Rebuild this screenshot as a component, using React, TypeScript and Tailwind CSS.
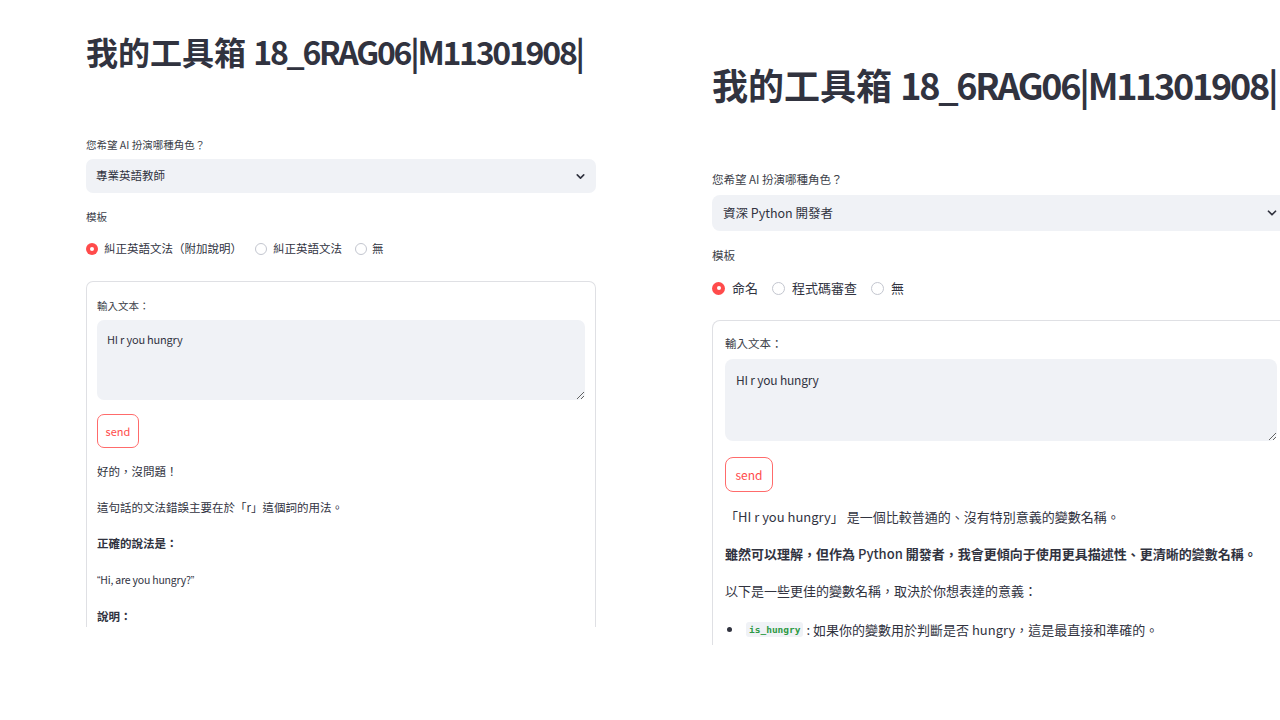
import { ChevronDown } from "lucide-react";

const font = "font-['Noto_Sans_CJK_TC','Noto_Sans_CJK_SC',sans-serif]";

function Radio({ checked, size }: { checked?: boolean; size: string }) {
  if (checked) {
    return (
      <span className={`${size} shrink-0 rounded-full bg-[#ff4b4b] flex items-center justify-center`}>
        <span className="w-[4px] h-[4px] rounded-full bg-white" />
      </span>
    );
  }
  return <span className={`${size} block shrink-0 rounded-full border border-[#c3c6cf] bg-white`} />;
}

function LeftShot() {
  return (
    <div className={`ml-[86px] w-[510px] shrink-0 h-[627px] overflow-hidden flex flex-col text-[#31333f] ${font}`}>
      <h1 className="mt-[30px] text-[32px] leading-[42px] font-bold whitespace-nowrap">
        我的工具箱 <span className="tracking-[-2.25px]">18_6RAG06|M11301908|</span>
      </h1>

      <div className="mt-[64px] text-[10.5px] leading-[17px] text-[#3d3f4a]">您希望 AI 扮演哪種角色？</div>
      <div className="mt-[6px] h-[34px] rounded-[7px] bg-[#f0f2f6] flex items-center justify-between pl-[10px] pr-[9px]">
        <span className="text-[11.5px]">專業英語教師</span>
        <ChevronDown size={13} strokeWidth={3} />
      </div>

      <div className="mt-[15px] text-[10.5px] leading-[17px] text-[#3d3f4a]">模板</div>
      <div className="mt-[14px] h-[20px] flex items-center text-[11.5px]">
        <Radio checked size="w-[12px] h-[12px]" />
        <span className="ml-[6px]">糾正英語文法（附加說明）</span>
        <span className="ml-[13px] flex"><Radio size="w-[12px] h-[12px]" /></span>
        <span className="ml-[6px]">糾正英語文法</span>
        <span className="ml-[13px] flex"><Radio size="w-[12px] h-[12px]" /></span>
        <span className="ml-[5px]">無</span>
      </div>

      <div className="mt-[22px] flex-1 border border-b-0 border-[#dfe0e4] rounded-t-[7px] px-[10px] pt-[15px] flex flex-col">
        <div className="text-[10.5px] leading-[17px] text-[#3d3f4a]">輸入文本：</div>
        <textarea
          readOnly
          value="HI r you hungry"
          className={`mt-[6px] h-[80px] w-full rounded-[7px] bg-[#f0f2f6] px-[10px] py-[10px] text-[11px] leading-[18px] tracking-[-0.2px] text-[#31333f] outline-none ${font}`}
        />
        <button className="mt-[14px] self-start w-[42px] h-[34px] rounded-[7px] border border-[#ff6b6b] bg-white text-[11px] text-[#ff4b4b]">
          send
        </button>
        <div className="mt-[13px] flex flex-col gap-[15px] text-[11.5px] leading-[21px]">
          <p>好的，沒問題！</p>
          <p>這句話的文法錯誤主要在於「r」這個詞的用法。</p>
          <p className="font-bold">正確的說法是：</p>
          <p className="text-[10.5px] tracking-[-0.2px]">
            <span className="font-['Liberation_Sans',sans-serif]">“</span>Hi, are you hungry?
            <span className="font-['Liberation_Sans',sans-serif]">”</span>
          </p>
          <p className="font-bold">說明：</p>
        </div>
      </div>
    </div>
  );
}

function RightShot() {
  return (
    <div className={`ml-[116px] w-[578px] shrink-0 h-[645px] overflow-hidden flex flex-col text-[#31333f] ${font}`}>
      <h1 className="mt-[60px] text-[36px] leading-[48px] font-bold whitespace-nowrap">
        我的工具箱 <span className="tracking-[-2.25px]">18_6RAG06|M11301908|</span>
      </h1>

      <div className="mt-[62px] text-[11.5px] leading-[19px] text-[#3d3f4a]">您希望 AI 扮演哪種角色？</div>
      <div className="mt-[6px] h-[36px] rounded-[8px] bg-[#f0f2f6] flex items-center justify-between pl-[11px] pr-[11px]">
        <span className="text-[12.5px]">資深 Python 開發者</span>
        <ChevronDown size={14} strokeWidth={3} />
      </div>

      <div className="mt-[15px] text-[11.5px] leading-[19px] text-[#3d3f4a]">模板</div>
      <div className="mt-[12px] h-[22px] flex items-center text-[13px]">
        <Radio checked size="w-[13px] h-[13px]" />
        <span className="ml-[7px]">命名</span>
        <span className="ml-[14px] flex"><Radio size="w-[13px] h-[13px]" /></span>
        <span className="ml-[7px]">程式碼審查</span>
        <span className="ml-[14px] flex"><Radio size="w-[13px] h-[13px]" /></span>
        <span className="ml-[7px]">無</span>
      </div>

      <div className="mt-[21px] flex-1 border border-b-0 border-[#dfe0e4] rounded-t-[8px] px-[12px] pt-[13px] flex flex-col">
        <div className="text-[11.5px] leading-[19px] text-[#3d3f4a]">輸入文本：</div>
        <textarea
          readOnly
          value="HI r you hungry"
          className={`mt-[6px] h-[82px] w-full rounded-[8px] bg-[#f0f2f6] px-[11px] py-[11px] text-[12px] leading-[20px] tracking-[-0.2px] text-[#31333f] outline-none ${font}`}
        />
        <button className="mt-[16px] self-start w-[48px] h-[35px] rounded-[8px] border border-[#ff6b6b] bg-white text-[12px] text-[#ff4b4b]">
          send
        </button>
        <div className="mt-[13px] flex flex-col gap-[14px] text-[13px] leading-[23px]">
          <p>「HI r you hungry」 是一個比較普通的、沒有特別意義的變數名稱。</p>
          <p className="font-bold whitespace-nowrap">
            雖然可以理解，但作為 <span className="font-medium">Python</span> 開發者，我會更傾向于使用更具描述性、更清晰的變數名稱。
          </p>
          <p>以下是一些更佳的變數名稱，取決於你想表達的意義：</p>
          <div className="mt-[2px] flex items-center">
            <span className="ml-[2px] w-[5px] h-[5px] rounded-full bg-[#31333f]" />
            <code className="ml-[14px] px-[3px] rounded-[3px] bg-[#f0f2f6] text-[9.5px] leading-[15px] font-bold text-[#2e9a45] font-['DejaVu_Sans_Mono',monospace]">
              is_hungry
            </code>
            <span className="ml-[3px]">: 如果你的變數用於判斷是否 hungry，這是最直接和準確的。</span>
          </div>
        </div>
      </div>
    </div>
  );
}

export default function App() {
  return (
    <div className="w-[1280px] h-[720px] overflow-hidden bg-white flex items-start">
      <LeftShot />
      <RightShot />
    </div>
  );
}
